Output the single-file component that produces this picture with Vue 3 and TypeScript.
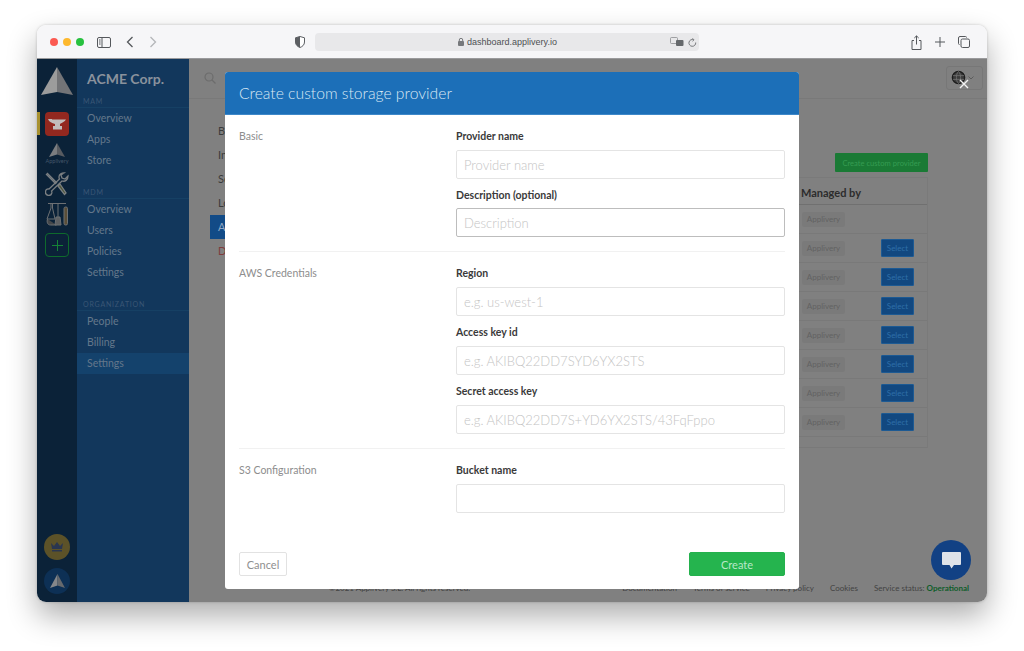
<script setup lang="ts">
const mam = ['Overview', 'Apps', 'Store']
const mdm = ['Overview', 'Users', 'Policies', 'Settings']
const org = ['People', 'Billing', 'Settings']
const tabs = ['Basic', 'Integrations', 'Security', 'Logs', 'Advanced', 'Delete']
const rows = [false, true, true, true, true, true, true, true]
</script>

<template>
  <div class="page">
    <div class="window">
      <header class="chrome">
        <span class="dot red"></span><span class="dot yellow"></span><span class="dot green"></span>
        <svg class="ico sidebar-ico" width="14" height="11" viewBox="0 0 14 11" fill="none" stroke="#55585c" stroke-width="1">
          <rect x="0.5" y="0.5" width="13" height="10" rx="1.5" />
          <path d="M5 .5v10" />
          <path d="M2 3h1.6M2 5h1.6M2 7h1.6" />
        </svg>
        <svg class="ico back" width="8" height="12" viewBox="0 0 8 12" fill="none" stroke="#55585c" stroke-width="1.3"><path d="M6.5 1 1.5 6l5 5" /></svg>
        <svg class="ico fwd" width="8" height="12" viewBox="0 0 8 12" fill="none" stroke="#b4b6b9" stroke-width="1.3"><path d="M1.5 1l5 5-5 5" /></svg>
        <svg class="ico shield" width="10" height="12" viewBox="0 0 10 12">
          <path d="M5 .5 9.500 1.800V6c0 3-2.200 4.600-4.500 5.500C2.700 10.600.5 9 .5 6V1.800z" fill="#fff" stroke="#5c5f63" />
          <path d="M5 .5V11.500C2.700 10.600.5 9 .5 6V1.800z" fill="#5c5f63" />
        </svg>
        <div class="address">
          <span class="url">
            <svg width="6" height="8" viewBox="0 0 6 8"><rect y="3" width="6" height="5" rx="1" fill="#77797c" /><path d="M1.300 3.500V2a1.700 1.700 0 0 1 3.400 0v1.500" fill="none" stroke="#77797c" /></svg>
            dashboard.applivery.io
          </span>
          <svg class="translate" width="14" height="10" viewBox="0 0 14 10">
            <rect x=".5" y=".5" width="7" height="6" rx="1" fill="none" stroke="#8b8d90" stroke-width=".8" />
            <rect x="6" y="3" width="7.500" height="6" rx="1" fill="#65686b" />
          </svg>
          <svg class="reload" width="9" height="10" viewBox="0 0 9 10" fill="none" stroke="#77797c"><path d="M7.700 4.500a3.400 3.400 0 1 1-2-2.700" /><path d="M4.500.3 6 1.800 4.500 3.200" /></svg>
        </div>
        <svg class="ico share" width="11" height="15" viewBox="0 0 11 15" fill="none" stroke="#55585c">
          <path d="M3 5.500H1v9h9v-9H8M5.500 9.500V1M3.300 3 5.500 .9 7.700 3" />
        </svg>
        <svg class="ico plus" width="10" height="10" viewBox="0 0 10 10" stroke="#55585c"><path d="M5 0v10M0 5h10" /></svg>
        <svg class="ico tabs-ico" width="12" height="12" viewBox="0 0 12 12" fill="none" stroke="#55585c">
          <rect x="3" y="3" width="8.500" height="8.500" rx="1.500" /><path d="M1.500 8.500A1 1 0 0 1 .5 7.500v-5.500a1.500 1.500 0 0 1 1.500-1.500h5.500a1 1 0 0 1 1 1" />
        </svg>
      </header>

      <div class="app">
        <aside class="rail">
          <svg class="logo" width="32" height="28" viewBox="0 0 32 28">
            <path d="M16 0 0 28 16 25z" fill="#9c9c9c" /><path d="M16 0 32 28 16 25z" fill="#737477" />
          </svg>
          <div class="rail-active">
            <div class="anvil">
              <svg width="18" height="11" viewBox="0 0 18 11"><path d="M0 0h4v.5h14c-1 2-5 3.500-6 4.500v2h2v3.500H5V7h2V5C4 4 1 3 0 0z" fill="#c2bdbb" /></svg>
            </div>
          </div>
          <div class="app-mini">
            <svg width="16" height="14" viewBox="0 0 16 14"><path d="M8 0 0 14l8-2.500z" fill="#7b7d80" /><path d="M8 0l8 14-8-2.500z" fill="#585b60" /></svg>
            <span>Applivery</span>
          </div>
          <svg class="tools" width="24" height="24" viewBox="0 0 24 24" fill="none" stroke="#7b7f82" stroke-width="1.300">
            <path d="M2 1 12 11M1 2l10 10" />
            <path d="M15 12 21 21l-1.500 1.500L13 14z" fill="#4d5636" />
            <path d="M23 4l-3 3-3-1-1-3 3-2c-2 0-5 1-5 4 0 1 0 1.500.5 2L4 17c-2-.5-3.500 1-3.500 3a3.200 3.200 0 0 0 6.300 1c.2-1 0-1.500-.3-2L17 9c3 1 6-1 6-5z" />
          </svg>
          <svg class="flasks" width="24" height="24" viewBox="0 0 24 24" fill="none" stroke="#6d7073">
            <path d="M3 .5h18M6 1v4L2 16h8L7.500 5V1" />
            <path d="M2.500 16c-1 3 0 6 3 6h6" fill="#45484b" />
            <path d="M13 1v13M11 14h4l1 8h-6z" fill="#5d6063" />
            <rect x="19" y="4" width="3.500" height="18" rx="1.500" fill="#5a4e38" />
          </svg>
          <div class="add">
            <svg width="11" height="11" viewBox="0 0 11 11" stroke="#148436" stroke-width="1"><path d="M5.500 0v11M0 5.500h11" /></svg>
          </div>
          <div class="rail-spacer"></div>
          <div class="crown">
            <svg width="14" height="10" viewBox="0 0 14 10"><path d="M1 1l3 3 3-4 3 4 3-3-1 6H2z M2 8h10v1.500H2z" fill="#2a3650" /></svg>
          </div>
          <div class="round-logo">
            <svg width="15" height="14" viewBox="0 0 15 14"><path d="M7.500 0 0 14l7.500-2.500z" fill="#85878a" /><path d="M7.500 0 15 14l-7.500-2.500z" fill="#66696d" /></svg>
          </div>
        </aside>

        <nav class="panel">
          <h1>ACME Corp.</h1>
          <h2 class="first">MAM</h2>
          <a v-for="m in mam" :key="'a' + m">{{ m }}</a>
          <h2 class="mdm">MDM</h2>
          <a v-for="m in mdm" :key="'b' + m">{{ m }}</a>
          <h2 class="org">ORGANIZATION</h2>
          <a v-for="(m, i) in org" :key="'c' + m" :class="{ on: i === 2 }">{{ m }}</a>
        </nav>

        <main class="main">
          <div class="topbar">
            <svg width="12" height="12" viewBox="0 0 12 12" fill="none" stroke="#6c6c6c" stroke-width="1.200"><circle cx="5" cy="5" r="4" /><path d="M8 8l3.500 3.500" /></svg>
            <div class="lang">
              <svg width="15" height="15" viewBox="0 0 16 16" fill="none" stroke="#1c1c1c" stroke-width="1.500"><circle cx="8" cy="8" r="6.500" fill="#3c3c3c" /><path d="M2 6h12M2 10h12M8 1.500c-3 3-3 10 0 13M8 1.500c3 3 3 10 0 13" stroke="#777" stroke-width=".8" /></svg>
              <svg class="x" width="10" height="10" viewBox="0 0 10 10" stroke="#f2f2f2" stroke-width="1.400"><path d="M1 1l8 8M9 1l-8 8" /></svg>
              <svg width="6" height="4" viewBox="0 0 6 4" fill="none" stroke="#5c5c5c"><path d="M.5.500 3 3 5.500.500" /></svg>
            </div>
          </div>

          <div class="content">
            <ul class="tabs">
              <li v-for="(t, i) in tabs" :key="t" :class="{ active: i === 4, danger: i === 5 }">{{ t }}</li>
            </ul>
            <div class="table-wrap">
              <button class="new">Create custom provider</button>
              <div class="table">
                <div class="thead">Managed by</div>
                <div v-for="(sel, i) in rows" :key="i" class="row">
                  <span class="tag">Applivery</span>
                  <button v-if="sel" class="select">Select</button>
                </div>
                <div class="tfoot"></div>
              </div>
            </div>
          </div>

          <footer class="foot">
            <span class="copy">©2021 Applivery S.L. All rights reserved.</span>
            <span>Documentation</span><span>Terms of service</span><span>Privacy policy</span><span>Cookies</span>
            <span>Service status: <b>Operational</b></span>
          </footer>
        </main>

        <button class="chat" aria-label="Chat">
          <svg width="19" height="17" viewBox="0 0 19 17"><path d="M1 0h17a1 1 0 0 1 1 1v11a1 1 0 0 1-1 1h-6l-2.500 3.500L7.500 13H1a1 1 0 0 1-1-1V1a1 1 0 0 1 1-1z" fill="#dfe3e9" /></svg>
        </button>

        <section class="modal">
          <div class="modal-head">Create custom storage provider</div>
          <div class="modal-body">
            <div class="group basic">
              <div class="group-name">Basic</div>
              <div class="fields">
                <label>Provider name</label>
                <input placeholder="Provider name" />
                <label>Description (optional)</label>
                <input class="focus" placeholder="Description" />
              </div>
            </div>
            <div class="group">
              <div class="group-name">AWS Credentials</div>
              <div class="fields">
                <label>Region</label>
                <input placeholder="e.g. us-west-1" />
                <label>Access key id</label>
                <input placeholder="e.g. AKIBQ22DD7SYD6YX2STS" />
                <label>Secret access key</label>
                <input placeholder="e.g. AKIBQ22DD7S+YD6YX2STS/43FqFppo" />
              </div>
            </div>
            <div class="group last">
              <div class="group-name">S3 Configuration</div>
              <div class="fields">
                <label>Bucket name</label>
                <input />
              </div>
            </div>
          </div>
          <div class="modal-foot">
            <button class="cancel">Cancel</button>
            <button class="create">Create</button>
          </div>
        </section>
      </div>
    </div>
  </div>
</template>

<style>
html, body { margin: 0; background: #fff; }
</style>

<style scoped>
* { box-sizing: border-box; }
.page {
  width: 1024px; height: 651px; padding: 25px 37px 0;
  font-family: Lato, "Liberation Sans", sans-serif; overflow: hidden; background: #fff;
}
.window {
  width: 950px; height: 577px; border-radius: 9px; overflow: hidden; display: flex; flex-direction: column;
  box-shadow: 0 14px 30px rgba(0,0,0,.32), 0 0 3px rgba(0,0,0,.2);
  position: relative;
}
.chrome {
  height: 34px; flex: none; background: #f6f6f8; border-bottom: 1px solid #9a9a9c;
  display: flex; align-items: center; padding: 1px 0 0 13px;
}
.dot { width: 8px; height: 8px; border-radius: 50%; margin-right: 5px; flex: none; }
.red { background: #fb5a52; } .yellow { background: #fdb82e; } .green { background: #27c13f; }
.ico { flex: none; }
.sidebar-ico { margin-left: 8px; }
.back { margin-left: 15px; }
.fwd { margin-left: 15px; }
.shield { margin-left: 138px; }
.address {
  margin-left: 10px; width: 384px; height: 18px; border-radius: 4px; background: #e8e8ea; flex: none;
  position: relative; display: flex; align-items: center; justify-content: center;
}
.url { font: 9px "Liberation Sans", sans-serif; color: #4e5053; display: flex; align-items: center; gap: 3px; margin-left: 1px; }
.translate { position: absolute; left: 355px; top: 4px; }
.reload { position: absolute; left: 373px; top: 5px; }
.share { margin-left: 212px; }
.plus { margin-left: 13px; }
.tabs-ico { margin-left: 13px; }

.app { flex: 1; display: flex; position: relative; min-height: 0; }
.rail { width: 40px; flex: none; background: #0b2238; display: flex; flex-direction: column; align-items: center; }
.logo { margin-top: 8px; flex: none; }
.rail-active { margin-top: 17px; width: 100%; display: flex; justify-content: center; position: relative; }
.rail-active::before { content: ""; position: absolute; left: 0; top: 0; width: 3px; height: 23px; background: #a8912f; }
.anvil { width: 24px; height: 24px; border-radius: 4px; background: #93281f; display: flex; align-items: center; justify-content: center; }
.app-mini { margin-top: 7px; display: flex; flex-direction: column; align-items: center; }
.app-mini span { font-size: 5.500px; color: #44566a; line-height: 7px; margin-top: 1px; }
.tools { margin-top: 7px; flex: none; }
.flasks { margin-top: 7px; flex: none; }
.add { margin-top: 6px; width: 24px; height: 24px; border: 1px solid #0e6a2c; border-radius: 4px; display: flex; align-items: center; justify-content: center; }
.rail-spacer { flex: 1; }
.crown { width: 26px; height: 26px; border-radius: 50%; background: #5c5228; display: flex; align-items: center; justify-content: center; margin-bottom: 8px; }
.round-logo { width: 26px; height: 26px; border-radius: 50%; background: #0d3055; display: flex; align-items: center; justify-content: center; margin-bottom: 8px; }

.panel { width: 112px; flex: none; background: #12375c; display: flex; flex-direction: column; }
.panel h1 { margin: 11px 0 0 10px; font-size: 14px; line-height: 18px; font-weight: 700; color: #8a929c; }
.panel h2 { margin: 0; padding-left: 6px; padding-bottom: 1px; font-size: 7px; font-weight: 400; letter-spacing: .8px; line-height: 10px; color: #3a5675; border-bottom: 1px solid #164064; }
.panel h2.first { margin-top: 8px; }
.panel h2.mdm { margin-top: 16px; }
.panel h2.org { margin-top: 16px; }
.panel a { height: 21px; line-height: 21px; padding-left: 10px; font-size: 10.500px; color: #64778b; }
.panel a.on { background: #14426c; }

.main { flex: 1; background: #808080; display: flex; flex-direction: column; position: relative; min-width: 0; }
.topbar { height: 40px; flex: none; border-bottom: 1px solid #797979; display: flex; align-items: center; justify-content: space-between; padding: 0 4px 2px 15px; }
.lang { width: 37px; height: 24px; border: 1px solid #777; border-radius: 3px; display: flex; align-items: center; gap: 2px; padding-left: 4px; position: relative; }
.lang .x { position: absolute; left: 12px; top: 12px; }

.content { flex: 1; display: flex; min-height: 0; }
.tabs { list-style: none; margin: 20px 0 0 21px; padding: 0; width: 15px; flex: none; overflow: hidden; white-space: nowrap; font-size: 11px; color: #3b3b3b; }
.tabs li { height: 24px; line-height: 24px; padding-left: 8px; overflow: hidden; }
.tabs li.active { background: #124b87; color: #8fa8c4; }
.tabs li.danger { color: #7f3c3c; }
.table-wrap { flex: 1; margin-right: 59px; display: flex; flex-direction: column; align-items: flex-end; min-width: 0; }
.new { margin-top: 54px; width: 93px; height: 19px; border: 0; border-radius: 1px; background: #1a7a35; color: #359c52; font: 7.600px Lato, sans-serif; padding: 0; }
.table { margin-top: 5px; width: 100%; font-size: 9px; border-right: 1px solid #7a7a7a; }
.thead { height: 28px; line-height: 30px; padding-left: 576px; font-size: 11px; font-weight: 700; color: #2c2c2c; border-bottom: 1px solid #707070; border-top: 1px solid #7a7a7a; }
.row { height: 29px; border-bottom: 1px solid #797979; display: flex; align-items: center; justify-content: space-between; padding: 0 13px 0 577px; }
.tag { width: 43px; height: 15px; line-height: 15px; text-align: center; border-radius: 2px; background: #7a7a7a; color: #626262; font-size: 8px; }
.select { width: 33px; height: 18px; border: 1px solid #1d5a93; border-radius: 1px; background: #124880; color: #2f6fa8; font: 8px Lato, sans-serif; padding: 0; }
.tfoot { height: 11px; border-bottom: 1px solid #797979; }

.foot { height: 27px; flex: none; display: flex; align-items: center; justify-content: flex-end; gap: 16px; padding: 0 18px 2px 0; font-size: 8px; color: #434343; }
.copy { margin-right: 136px; }
.foot b { color: #0f5d2a; font-weight: 700; }

.chat { position: absolute; right: 16px; top: 481px; width: 40px; height: 40px; border: 0; border-radius: 50%; background: #124184; display: flex; align-items: center; justify-content: center; padding: 0; }

.modal {
  position: absolute; left: 188px; top: 13px; width: 574px; height: 517px;
  background: #fff; border-radius: 3px; overflow: hidden; display: flex; flex-direction: column;
}
.modal-head {
  height: 43px; flex: none; background: #1c6fb8; border-bottom: 1px solid #3e88c9; color: #d9e8f4;
  font-size: 15.700px; font-weight: 300; line-height: 43px; padding-left: 14px;
}
.modal-body { flex: 1; padding: 0 14px; }
.group { display: flex; border-bottom: 1px solid #f1f1f1; padding: 14px 0; }
.group.last { border-bottom: 0; }
.group-name { width: 217px; font-size: 10.500px; line-height: 14px; color: #8d8d8d; flex: none; }
.fields { flex: 1; display: flex; flex-direction: column; }
.fields label { font-size: 10.500px; font-weight: 700; line-height: 14px; color: #3a3a3a; margin-bottom: 7px; }
.fields input {
  height: 29px; width: 100%; border: 1px solid #e4e4e4; border-radius: 2px; padding: 0 7px; margin-bottom: 9px;
  font: 300 13px Lato, sans-serif; color: #333; background: #fff; outline: 0; display: block;
}
.fields input:last-child { margin-bottom: 0; }
.basic label:nth-of-type(2) { margin-bottom: 6px; }
.fields input.focus { border-color: #bdbdbd; }
.fields input::placeholder { color: #c4c4c4; opacity: 1; }
.modal-foot { height: 37px; flex: none; display: flex; justify-content: space-between; align-items: flex-start; padding: 0 14px; }
.cancel { width: 48px; height: 24px; border: 1px solid #e2e2e2; border-radius: 2px; background: #fff; color: #8f8f8f; font: 11px Lato, sans-serif; padding: 0; }
.create { width: 96px; height: 24px; border: 1px solid #24b14d; border-radius: 2px; background: #25b44e; color: #b8e8c6; font: 11px Lato, sans-serif; padding: 0; }
</style>
